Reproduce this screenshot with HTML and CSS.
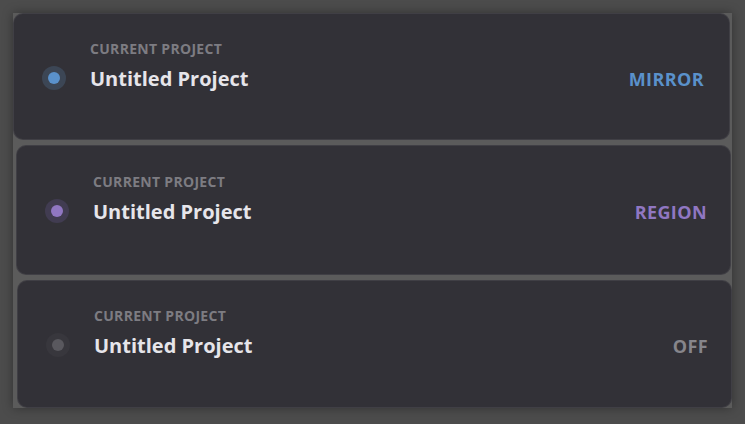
FILE: index.html
```html
<!DOCTYPE html>
<html lang="en">
<head>
    <meta charset="UTF-8">
    <title>Project Modes</title>
    <link rel="stylesheet" href="styles.css">
</head>
<body>
    <div class="stack">
        <div class="card card-mirror">
            <span class="dot"><span class="dot-core"></span></span>
            <div class="info">
                <p class="label">CURRENT PROJECT</p>
                <p class="title">Untitled Project</p>
            </div>
            <span class="mode">MIRROR</span>
        </div>
        <div class="card card-region">
            <span class="dot"><span class="dot-core"></span></span>
            <div class="info">
                <p class="label">CURRENT PROJECT</p>
                <p class="title">Untitled Project</p>
            </div>
            <span class="mode">REGION</span>
        </div>
        <div class="card card-off">
            <span class="dot"><span class="dot-core"></span></span>
            <div class="info">
                <p class="label">CURRENT PROJECT</p>
                <p class="title">Untitled Project</p>
            </div>
            <span class="mode">OFF</span>
        </div>
    </div>
</body>
</html>
```

FILE: styles.css
```css
* {
    margin: 0;
    padding: 0;
    box-sizing: border-box;
}

body {
    font-family: 'Open Sans', 'Noto Sans', sans-serif;
    background-color: #4c4c4c;
    width: 745px;
    height: 424px;
    overflow: hidden;
}

/* Column of mode cards */
.stack {
    display: flex;
    flex-direction: column;
    gap: 5px;
    margin: 13px 0 0 13px;
    width: 719px;
    background: #5b5b5b;
    box-shadow: 0 0 10px rgba(0, 0, 0, 0.35);
}

.card {
    display: flex;
    align-items: flex-start;
    width: 717px;
    height: 127px;
    padding: 26px 25px 0 28px;
    background: #323137;
    border: 1px solid rgba(255, 255, 255, 0.07);
    border-radius: 10px;
}

.card-region {
    width: 715px;
    margin-left: 3px;
    height: 130px;
    padding-top: 27px;
    padding-right: 23px;
}

.card-off {
    width: 715px;
    margin-left: 4px;
    height: 128px;
    padding-right: 23px;
}

/* Status dot */
.dot {
    width: 24px;
    height: 24px;
    border-radius: 50%;
    display: flex;
    align-items: center;
    justify-content: center;
    margin-top: 26px;
    flex-shrink: 0;
}

.dot-core {
    width: 12px;
    height: 12px;
    border-radius: 50%;
}

.card-mirror .dot { background: #3c4655; }
.card-mirror .dot-core { background: #5a91cb; }
.card-region .dot { background: #413c51; }
.card-region .dot-core { background: #9077c2; }
.card-off .dot { background: #38373d; }
.card-off .dot-core { background: #59585e; }

.info {
    flex: 1;
    margin-left: 24px;
}

.label {
    font-size: 14px;
    font-weight: 700;
    color: #7d7c82;
    letter-spacing: 0.3px;
    line-height: 18px;
}

.title {
    font-size: 20px;
    font-weight: 700;
    color: #e6e5ea;
    line-height: 26px;
    margin-top: 8px;
}

.mode {
    font-size: 18px;
    font-weight: 700;
    line-height: 24px;
    letter-spacing: 0.4px;
    margin-top: 27px;
}

.card-mirror .mode { color: #5a91cb; }
.card-region .mode { color: #9077c2; }
.card-off .mode { color: #86858b; }
```
